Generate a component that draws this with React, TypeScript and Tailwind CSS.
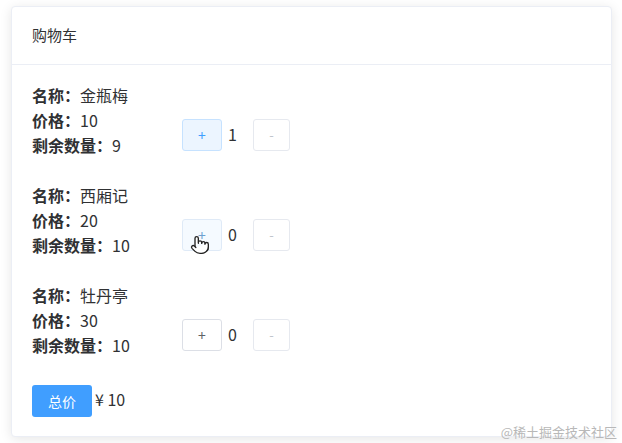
import { Pointer } from "lucide-react";

const books = [
  { name: "金瓶梅", price: 10, stock: 9, count: 1, plus: "focus" },
  { name: "西厢记", price: 20, stock: 10, count: 0, plus: "hover" },
  { name: "牡丹亭", price: 30, stock: 10, count: 0, plus: "normal" },
];

const plusStyle: Record<string, string> = {
  focus: "bg-[#ecf5ff] border-[#c6e2ff] text-[#409eff]",
  hover: "bg-[#f5faff] border-[#dfeaf7] text-[#6f9fd0]",
  normal: "bg-white border-[#dcdfe6] text-[#606266]",
};

export default function App() {
  return (
    <div
      className="relative w-[622px] h-[443px] bg-white overflow-hidden text-[#303133]"
      style={{ fontFamily: '"Noto Sans CJK SC", "Noto Sans", sans-serif' }}
    >
      <div className="ml-[11px] mt-[6px] w-[601px] h-[431px] border border-[#ebeef5] rounded-[4px] bg-white shadow-[0_2px_12px_0_rgba(0,0,0,0.1)]">
        {/* Header */}
        <div className="px-5 h-[58px] flex items-center border-b border-[#ebeef5] text-[15px] text-[#303133]">
          购物车
        </div>

        {/* Body */}
        <div className="p-5 flex flex-col gap-[25px]">
          {books.map((b) => (
            <div key={b.name} className="flex items-start">
              <div className="relative -top-[2px] w-[150px] text-[16px] leading-[25px]">
                <div>
                  <span className="font-bold">名称：</span>
                  {b.name}
                </div>
                <div>
                  <span className="font-bold">价格：</span>
                  {b.price}
                </div>
                <div>
                  <span className="font-bold">剩余数量：</span>
                  {b.stock}
                </div>
              </div>
              <div className="relative mt-[34px] flex items-center">
                <button
                  className={`h-[32px] w-[40px] border rounded-[3px] text-[14px] flex items-center justify-center ${plusStyle[b.plus]}`}
                >
                  +
                </button>
                <span className="ml-[6px] w-[10px] text-[16px] leading-none -mt-[3px]">{b.count}</span>
                <button className="ml-[15px] h-[32px] w-[37px] border border-[#e6e9ef] rounded-[3px] bg-white text-[#c0c4cc] text-[13px] flex items-center justify-center">
                  -
                </button>
                {b.plus === "hover" && (
                  <Pointer
                    className="absolute left-[8px] top-[16px] w-[20px] h-[20px]"
                    fill="white"
                    stroke="#222"
                    strokeWidth={1.6}
                  />
                )}
              </div>
            </div>
          ))}

          <div className="flex items-center">
            <button className="h-[32px] w-[60px] rounded-[3px] bg-[#409eff] text-white text-[14px] flex items-center justify-center">
              总价
            </button>
            <span className="ml-[3px] -mt-[4px] text-[16px]">¥ 10</span>
          </div>
        </div>
      </div>

      <div className="absolute right-[5px] bottom-[2px] text-[13px] text-[#b8b8b8]">
        @稀土掘金技术社区
      </div>
    </div>
  );
}
